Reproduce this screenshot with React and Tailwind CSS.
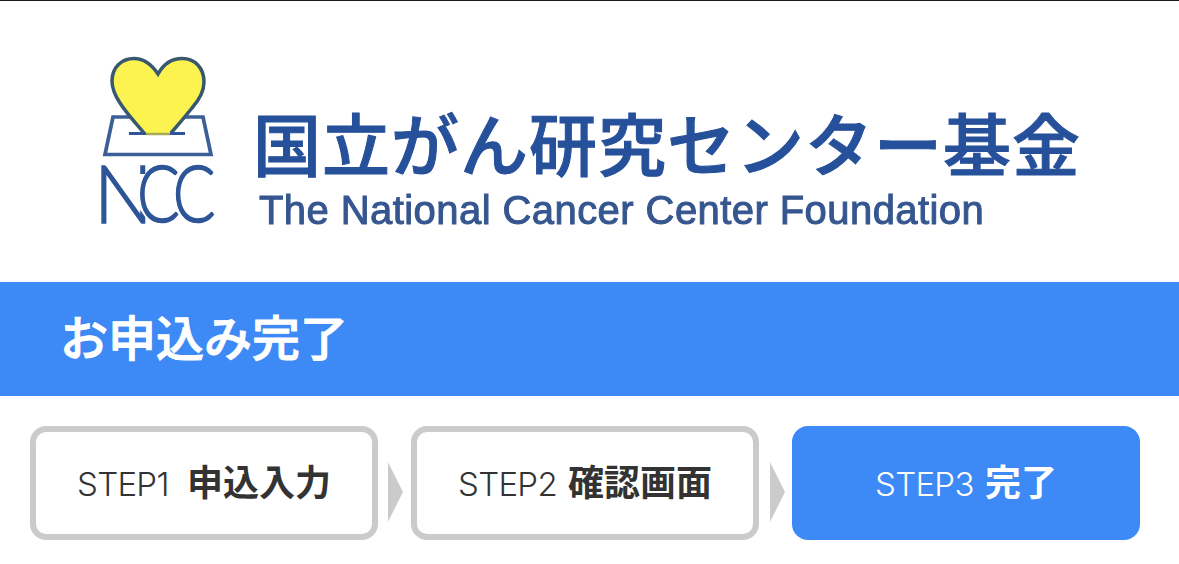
const jp = "font-['Noto_Sans_CJK_JP',sans-serif]";

function LogoMark() {
  return (
    <svg className="h-[200px] w-[160px] shrink-0" viewBox="0 0 160 200" fill="none" aria-label="NCC">
      <defs>
        <clipPath id="n-stem">
          <path d="M16 120H72V134H56V164L70 184H16Z" />
        </clipPath>
      </defs>
      <path d="M51 77H33L25 114.500H131L123 77H105" stroke="#3c5f98" strokeWidth="3.700" />
      <path
        d="M64 93C55 82 47 74 40 63C34 54 32 47 32 41C32 27 42 18.500 54 18.500C65 18.500 72 25 78 34C83 25 91 18.500 102 18.500C115 18.500 124 28 124 42C124 50 120 59 112 68C104 78 99 84 91 93Z"
        fill="#fcf351"
      />
      <path
        d="M64 93C55 82 47 74 40 63C34 54 32 47 32 41C32 27 42 18.500 54 18.500C65 18.500 72 25 78 34C83 25 91 18.500 102 18.500C115 18.500 124 28 124 42C124 50 120 59 112 68C104 78 99 84 91 93"
        stroke="#37586f"
        strokeWidth="3.500"
      />
      <path d="M49 93.500H66M90 93.500H105" stroke="#2d5597" strokeWidth="3" />
      <path d="M66 94H90" stroke="#a8a957" strokeWidth="2.500" />
      <g fill="#2d5597" stroke="#2d5597" strokeWidth="1.600" fontFamily="Lato" fontWeight="300" fontSize="80">
        <g clipPath="url(#n-stem)">
          <text transform="translate(14 182.500) scale(0.970 1.010)">N</text>
        </g>
        <text transform="translate(57 182) scale(0.790 0.980)" letterSpacing="-8">CC</text>
      </g>
    </svg>
  );
}

function Arrow() {
  return (
    <svg className="mt-[18px] h-[60px] w-[15px] shrink-0" viewBox="0 0 15 60">
      <path d="M0 0L15 30L0 60Z" fill="#cbcbcb" />
    </svg>
  );
}

function Step({ label, title, active }) {
  return (
    <div
      className={
        "flex h-[114px] w-[348px] shrink-0 items-center justify-center rounded-[16px] border-[6px] whitespace-nowrap " +
        (active ? "border-[#3d89f5] bg-[#3d89f5] text-white" : "border-[#cbcbcb] bg-white text-[#333]")
      }
    >
      <span className="mr-[11px] w-[99px] pt-[2px] font-['Inter',sans-serif] text-[33px] leading-none font-light tracking-[-0.7px]">
        {label}
      </span>
      <span className={jp + " pb-[7px] text-[36px] leading-none font-bold"}>{title}</span>
    </div>
  );
}

export default function App() {
  return (
    <div className="h-[564px] w-[1179px] overflow-hidden border-t border-[#19191b] bg-white">
      <header className="flex h-[281px] pt-[39px] pl-[80px] blur-[0.7px]">
        <LogoMark />
        <div className="flex flex-col pt-[66px] pl-[13px] whitespace-nowrap text-[#26509a]">
          <div className={jp + " text-[68px] leading-[72px] font-medium tracking-[1px] [-webkit-text-stroke:1px_#26509a]"}>
            国立がん研究センター基金
          </div>
          <div className="pt-[11px] pl-[6px] font-['Liberation_Sans',sans-serif] text-[40px] leading-[42px] tracking-[0.43px] text-[#35568f] [-webkit-text-stroke:1px_#35568f]">
            The National Cancer Center Foundation
          </div>
        </div>
      </header>
      <h1
        className={
          jp +
          " flex h-[114px] items-center bg-[#3d89f5] pb-[8px] pl-[60px] text-[48px] leading-none font-medium text-white [-webkit-text-stroke:1px_#fff]"
        }
      >
        お申込み完了
      </h1>
      <main className="flex items-center pt-[30px] pl-[30px]">
        <Step label="STEP1" title="申込入力" />
        <div className="pr-[8px] pl-[10px]">
          <Arrow />
        </div>
        <Step label="STEP2" title="確認画面" />
        <div className="pr-[7px] pl-[11px]">
          <Arrow />
        </div>
        <Step label="STEP3" title="完了" active />
      </main>
    </div>
  );
}
